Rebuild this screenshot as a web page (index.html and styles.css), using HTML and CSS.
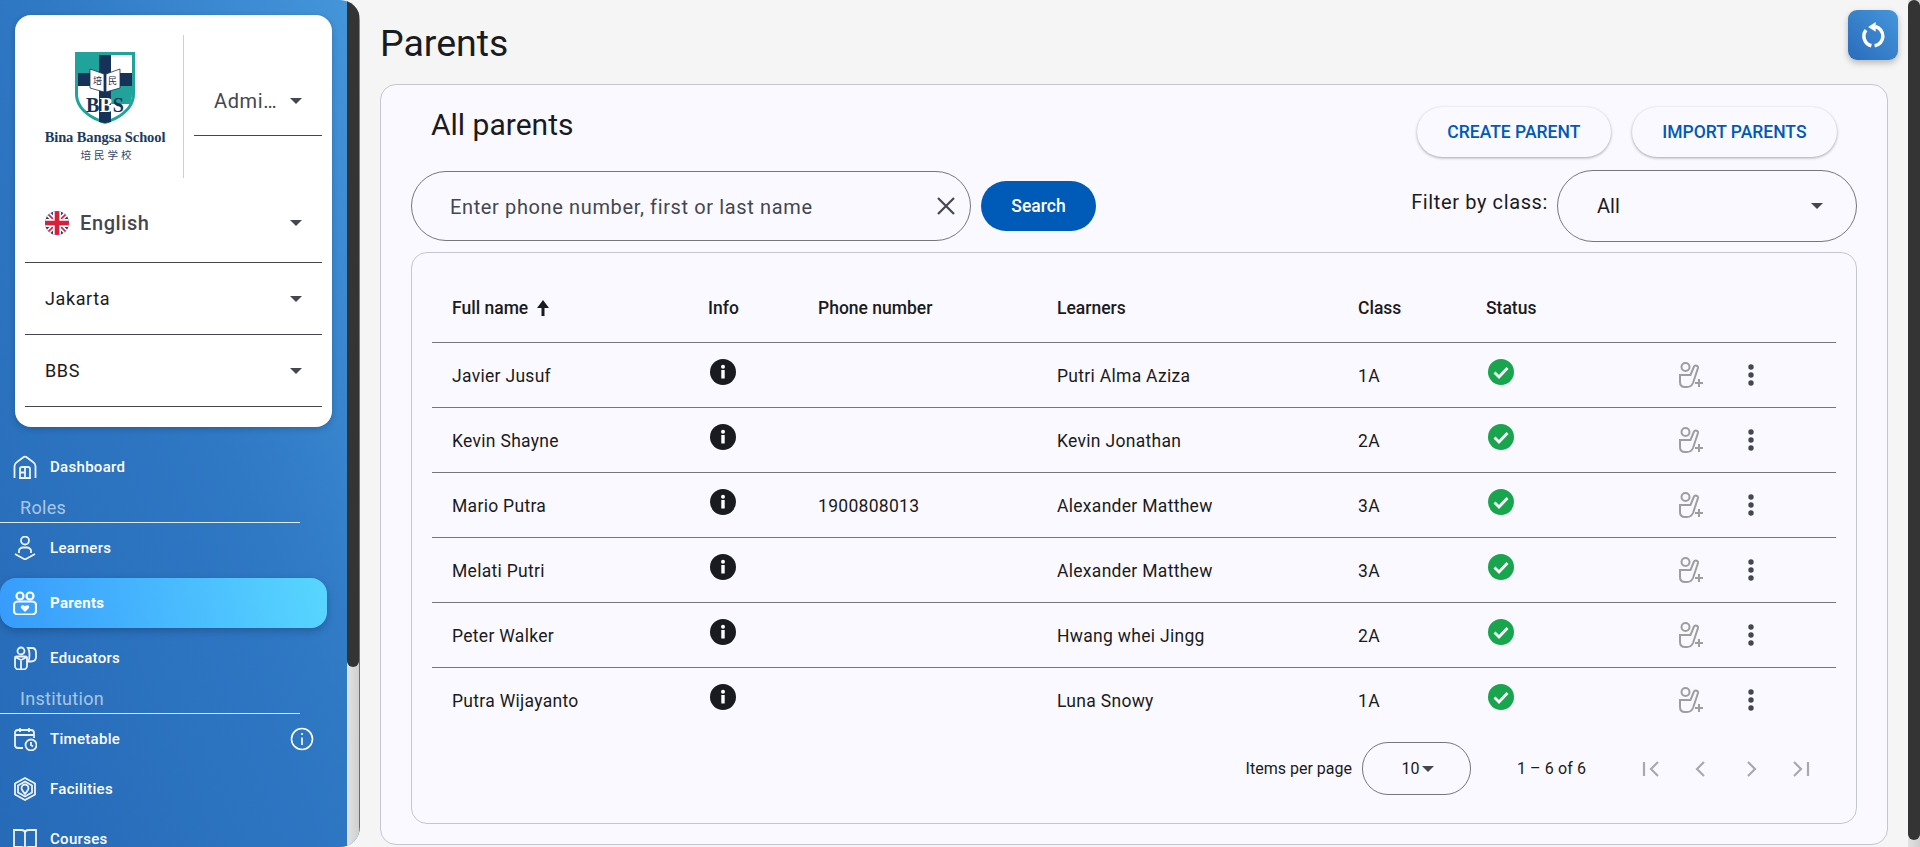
FILE: index.html
```html
<!DOCTYPE html>
<html lang="en">
<head>
<meta charset="utf-8">
<title>Parents</title>
<link rel="stylesheet" href="styles.css">
</head>
<body>
<aside class="sidebar">
  <div class="side-scroll">
    <div class="side-card">
      <div class="brand-row">
        <div class="logo">
          <svg class="crest" viewBox="0 0 60 72" width="60" height="72">
            <path d="M0 0H60V42C60 58 44 68 30 72C16 68 0 58 0 42Z" fill="#20a39a"/>
            <path d="M3 3H57V42C57 56 43 65 30 69C17 65 3 56 3 42Z" fill="#fff"/>
            <path d="M3 3H25V24H3Z" fill="#20a39a"/>
            <path d="M35 24H57V42C57 46 56 49 55 52H35Z" fill="#20a39a"/>
            <path d="M24 3H36V21H57V34H36V70L30 71L24 70V34H3V21H24Z" fill="#163259"/>
            <path d="M15 17L29 22V40L15 36ZM45 17L31 22V40L45 36Z" fill="#fff" stroke="#163259" stroke-width=".8"/>
            <text class="crest-cjk" x="22.500" y="32">培</text>
            <text class="crest-cjk" x="37.500" y="32">民</text>
            <text class="crest-bbs" x="30" y="60">B<tspan class="crest-mid">B</tspan>S</text>
          </svg>
          <div class="logo-name">Bina Bangsa School</div>
          <div class="logo-cjk">培民学校</div>
        </div>
        <div class="brand-divider"></div>
        <div class="select select-admin">
          <span class="select-text">Admi…</span>
          <span class="caret"></span>
        </div>
      </div>
      <div class="select select-lang">
        <svg class="flag" viewBox="0 0 24 24" width="24" height="24">
          <defs><clipPath id="flagclip"><circle cx="12" cy="12" r="12"/></clipPath></defs>
          <g clip-path="url(#flagclip)">
            <rect width="24" height="24" fill="#28407f"/>
            <path d="M0 0L24 24M24 0L0 24" stroke="#fff" stroke-width="5"/>
            <path d="M0 0L24 24M24 0L0 24" stroke="#d8203a" stroke-width="1.600"/>
            <path d="M12 0V24M0 12H24" stroke="#fff" stroke-width="8"/>
            <path d="M12 0V24M0 12H24" stroke="#d8203a" stroke-width="4.600"/>
          </g>
        </svg>
        <span class="select-text lang-text">English</span>
        <span class="caret"></span>
      </div>
      <div class="select"><span class="select-text">Jakarta</span><span class="caret"></span></div>
      <div class="select"><span class="select-text">BBS</span><span class="caret"></span></div>
    </div>
    <nav class="nav">
      <a class="nav-item">
        <svg class="nav-icon" viewBox="0 0 24 24"><path d="M1.500 23V11C1.500 9 2.500 8 4 7L10 2.500C11 1.500 13 1.500 14 2.500L20 7C21.500 8 22.500 9 22.500 11V23"/><path d="M7 23V14C7 13 8 12 9 12H15C16 12 17 13 17 14V23ZM7 17.500H12M12 12V23"/></svg>
        <span>Dashboard</span>
      </a>
      <div class="nav-section">Roles</div>
      <a class="nav-item">
        <svg class="nav-icon" viewBox="0 0 24 24"><circle cx="12" cy="4.500" r="4"/><path d="M6 17V14.500C6 13 8 11.500 10 11.500H14C16 11.500 18 13 18 14.500V17"/><path d="M2 18L12 23.500L22 18"/></svg>
        <span>Learners</span>
      </a>
      <a class="nav-item nav-active">
        <svg class="nav-icon" viewBox="0 0 24 24"><circle cx="7" cy="5" r="3.500"/><circle cx="17" cy="5" r="3.500"/><path d="M5 10.500H19C21 10.500 23 12 23 14V20C23 22 21 23.500 19 23.500H5C3 23.500 1 22 1 20V14C1 12 3 10.500 5 10.500Z"/><path class="fill" d="M12 21L8 17C7 15 9 13 12 15C15 13 17 15 16 17Z"/></svg>
        <span>Parents</span>
      </a>
      <a class="nav-item">
        <svg class="nav-icon" viewBox="0 0 24 24"><circle cx="8" cy="5" r="3.500"/><path d="M2 12C2 11 3 10.500 4 10.500H12C13 10.500 14 11 14 12V20C14 22 12 23.500 10 23.500H6C4 23.500 2 22 2 20ZM8 14V23.500M2 11L8 14L14 11"/><path d="M15 2H19C22 2 23 4 23 7V11C23 14 21 15.500 18 15.500H15C17 13 17 5 15 2Z"/></svg>
        <span>Educators</span>
      </a>
      <div class="nav-section">Institution</div>
      <a class="nav-item">
        <svg class="nav-icon" viewBox="0 0 24 24"><path d="M10 21H5C3 21 2 20 2 18V6C2 4 3 3 5 3H18C20 3 21 4 21 6V11M2 8H21M7 1V5M16 1V5"/><circle cx="18" cy="18" r="5.500"/><path d="M18 15V18L20 19.500"/></svg>
        <span>Timetable</span>
        <svg class="nav-info" viewBox="0 0 24 24"><circle cx="12" cy="12" r="10.500"/><path d="M12 10.500V18M12 6V8"/></svg>
      </a>
      <a class="nav-item">
        <svg class="nav-icon" viewBox="0 0 24 24"><path d="M12 1L22 6.500V17.500L12 23L2 17.500V6.500Z"/><path d="M12 4.500L19 8.500V15.500L12 19.500L5 15.500V8.500Z"/><path d="M12 17C9.500 14 8.500 12.500 8.500 11A3.500 3.500 0 0 1 15.500 11C15.500 12.500 14.500 14 12 17Z"/></svg>
        <span>Facilities</span>
      </a>
      <a class="nav-item">
        <svg class="nav-icon" viewBox="0 0 24 24"><path d="M1 3H8C10 3 12 4 12 6V23C12 21 10 20 8 20H1ZM23 3H16C14 3 12 4 12 6V23C12 21 14 20 16 20H23Z"/></svg>
        <span>Courses</span>
      </a>
    </nav>
  </div>
  <div class="rail rail-side"><div class="thumb thumb-side"></div></div>
</aside>

<main class="main">
  <header class="page-head">
    <h1 class="page-title">Parents</h1>
    <button class="refresh" type="button" aria-label="Refresh">
      <svg viewBox="0 0 24 24" width="26" height="26"><path class="refresh-arc" d="M5.600 7.500A9 9 0 0 0 10.500 21.900M13.500 21.900A9 9 0 0 0 14 4.200"/><path class="refresh-head" d="M14.500 0L7.500 4.500L14.500 9Z"/></svg>
    </button>
  </header>
  <section class="panel">
    <div class="panel-head">
      <h2 class="panel-title">All parents</h2>
      <div class="panel-actions">
        <button class="pill-btn" type="button">CREATE PARENT</button>
        <button class="pill-btn" type="button">IMPORT PARENTS</button>
      </div>
    </div>
    <div class="toolbar">
      <div class="search-field">
        <span class="search-text">Enter phone number, first or last name</span>
        <svg class="search-clear" viewBox="0 0 20 20" width="20" height="20"><path d="M2 2L18 18M18 2L2 18"/></svg>
      </div>
      <button class="search-btn" type="button">Search</button>
      <div class="filter">
        <span class="filter-label">Filter by class:</span>
        <div class="filter-select"><span>All</span><span class="caret"></span></div>
      </div>
    </div>
    <div class="table-card">
      <table class="table">
        <colgroup>
          <col class="c-name"><col class="c-info"><col class="c-phone"><col class="c-learner"><col class="c-class"><col class="c-status"><col class="c-actions">
        </colgroup>
        <thead>
          <tr>
            <th><span class="th-sort">Full name <svg viewBox="0 0 16 18" width="16" height="18"><path d="M8 1L14 9H9.500V17H6.500V9H2Z"/></svg></span></th>
            <th>Info</th><th>Phone number</th><th>Learners</th><th>Class</th><th>Status</th><th></th>
          </tr>
        </thead>
        <tbody id="rows"></tbody>
      </table>
      <div class="paginator">
        <span class="pg-label">Items per page</span>
        <div class="pg-select"><span>10</span><span class="caret"></span></div>
        <span class="pg-range">1 – 6 of 6</span>
        <div class="pg-buttons">
          <span class="pg-btn"><svg viewBox="0 0 24 24" width="24" height="24"><path d="M5 5V19M19 5L12 12L19 19"/></svg></span>
          <span class="pg-btn"><svg viewBox="0 0 24 24" width="24" height="24"><path d="M15 5L8 12L15 19"/></svg></span>
          <span class="pg-btn"><svg viewBox="0 0 24 24" width="24" height="24"><path d="M9 5L16 12L9 19"/></svg></span>
          <span class="pg-btn"><svg viewBox="0 0 24 24" width="24" height="24"><path d="M5 5L12 12L5 19M19 5V19"/></svg></span>
        </div>
      </div>
    </div>
  </section>
</main>
<div class="rail rail-page"><div class="thumb thumb-page"></div></div>

<template id="row-tpl">
  <tr>
    <td class="t-text t-name"></td>
    <td><svg class="status-icon" viewBox="0 0 26 26" width="26" height="26"><circle cx="13" cy="13" r="13" fill="#1a1b20"/><rect x="11.300" y="11" width="3.400" height="8.500" fill="#fff"/><circle cx="13" cy="7.800" r="2" fill="#fff"/></svg></td>
    <td class="t-text t-phone"></td>
    <td class="t-text t-learner"></td>
    <td class="t-text t-class"></td>
    <td><svg class="status-icon" viewBox="0 0 26 26" width="26" height="26"><circle cx="13" cy="13" r="13" fill="#18a54e"/><path d="M6.500 13.500L11 18L19.500 9" fill="none" stroke="#fff" stroke-width="2.800"/></svg></td>
    <td>
      <div class="row-actions">
        <svg class="add-icon" viewBox="0 0 30 30" width="30" height="30"><circle cx="9.500" cy="7" r="4"/><path d="M4 15V22C4 25 6 27 9 27H11C14 27 16 25.500 17 23L22 8C22.500 6 19 4.500 18 6.500L14.500 15Z"/><path d="M23 19V27M19 23H27"/></svg>
        <svg class="more-icon" viewBox="0 0 6 22" width="6" height="22"><circle cx="3" cy="3" r="2.700"/><circle cx="3" cy="11" r="2.700"/><circle cx="3" cy="19" r="2.700"/></svg>
      </div>
    </td>
  </tr>
</template>
<script src="app.js"></script>
</body>
</html>
```

FILE: app.js
```js
var data = [
  ["Javier Jusuf", "", "Putri Alma Aziza", "1A"],
  ["Kevin Shayne", "", "Kevin Jonathan", "2A"],
  ["Mario Putra", "1900808013", "Alexander Matthew", "3A"],
  ["Melati Putri", "", "Alexander Matthew", "3A"],
  ["Peter Walker", "", "Hwang whei Jingg", "2A"],
  ["Putra Wijayanto", "", "Luna Snowy", "1A"]
];
var tpl = document.getElementById("row-tpl");
var body = document.getElementById("rows");
data.forEach(function (r) {
  var n = tpl.content.cloneNode(true);
  n.querySelector(".t-name").textContent = r[0];
  n.querySelector(".t-phone").textContent = r[1];
  n.querySelector(".t-learner").textContent = r[2];
  n.querySelector(".t-class").textContent = r[3];
  body.appendChild(n);
});
```

FILE: styles.css
```css
* { box-sizing: border-box; }
html, body { margin: 0; height: 100%; }
body {
  display: flex;
  height: 847px;
  overflow: hidden;
  background: #f5f5f5;
  color: #1a1b20;
  font-family: Roboto, "Liberation Sans", "Noto Sans CJK SC", sans-serif;
}
.sidebar {
  flex: 0 0 360px;
  display: flex;
  height: 847px;
  overflow: hidden;
  border-radius: 0 20px 20px 0;
  background: linear-gradient(to bottom left, #4596db 0%, #2f78c4 45%, #266ab8 100%);
}
.side-scroll { flex: 1; min-width: 0; padding-top: 15px; }
.rail { flex: 0 0 12px; background: linear-gradient(to right, #e2e2e2, #cfcfcf); }
.rail-side { margin-right: 1px; border-radius: 0 0 14px 0; }
.thumb { background: #343434; }
.thumb-side { height: 667px; border-radius: 0 0 6px 6px; }
.rail-page { border-radius: 0; }
.thumb-page { height: 840px; border-radius: 6px; }

.side-card {
  width: 317px;
  height: 412px;
  margin: 0 0 15px 15px;
  padding: 20px 10px 0;
  background: #fff;
  border-radius: 16px;
  box-shadow: 0 2px 6px rgba(0, 0, 0, .2);
}
.brand-row { display: flex; align-items: flex-start; height: 144px; }
.logo { width: 158px; height: 143px; display: flex; flex-direction: column; align-items: center; padding: 17px 0 0 2px; }
.crest { display: block; }
.crest-cjk { font-size: 9px; font-family: "Noto Sans CJK SC", sans-serif; fill: #163259; text-anchor: middle; }
.crest-bbs { font-size: 20px; font-weight: 700; font-family: "Liberation Serif", serif; fill: #163259; text-anchor: middle; }
.crest-mid { fill: #fff; }
.logo-name { margin-top: 4px; font: 700 14.500px/18px "Liberation Serif", serif; color: #1b3a5e; white-space: nowrap; letter-spacing: -.1px; }
.logo-cjk { font: 10.500px/14px "Noto Sans CJK SC", sans-serif; letter-spacing: 3px; padding-left: 5px; color: #33496a; margin-top: 2px; }
.brand-divider { width: 1px; height: 143px; background: #cfcfcf; margin-right: 10px; }
.select {
  display: flex;
  align-items: center;
  height: 72px;
  padding: 0 20px;
  border-bottom: 1px solid #44474f;
  font-size: 18px;
  letter-spacing: .6px;
}
.select-text { flex: 1; min-width: 0; white-space: nowrap; }
.select-admin { width: 128px; margin-top: 29px; padding-top: 2px; color: #44474f; font-size: 20px; }
.select-lang { height: 84px; padding-top: 4px; }
.lang-text { color: #44474f; font-size: 20px; font-weight: 500; }
.flag { margin-right: 11px; }
.caret {
  flex: none;
  width: 0;
  height: 0;
  border-left: 6px solid transparent;
  border-right: 6px solid transparent;
  border-top: 6px solid #44474f;
}

.nav-item {
  display: flex;
  align-items: center;
  width: 327px;
  height: 50px;
  padding: 0 20px 0 13px;
  color: #fff;
  font-size: 15px;
  font-weight: 500;
  letter-spacing: .3px;
  gap: 13px;
}
.nav-item > span { flex: 1; }
.nav-icon { flex: none; width: 24px; height: 24px; fill: none; stroke: #fff; stroke-width: 1.800; opacity: .92; }
.nav-icon .fill { fill: #fff; stroke: none; }
.nav-info { flex: none; width: 24px; height: 24px; fill: none; stroke: #fff; stroke-width: 1.600; margin-right: -7px; }
.nav-section {
  width: 300px;
  height: 31px;
  padding: 5px 0 0 20px;
  border-bottom: 1px solid rgba(255, 255, 255, .85);
  color: rgba(255, 255, 255, .62);
  font-size: 18px;
  line-height: 21px;
  letter-spacing: .3px;
}
.nav-active {
  height: 50px;
  margin: 5px 0;
  border-radius: 16px;
  background: linear-gradient(80deg, #379bfc, #58d6ff);
  box-shadow: 0 3px 8px rgba(0, 0, 0, .22);
  font-weight: 700;
}
.nav-active .nav-icon { opacity: 1; stroke-width: 2.200; }

.main { flex: 1; min-width: 0; display: flex; flex-direction: column; padding: 0 20px; }
.page-head { display: flex; justify-content: space-between; height: 84px; flex: none; }
.page-title { margin: 22px 0 0; font-size: 37.500px; line-height: 42px; font-weight: 400; }
.refresh {
  width: 50px;
  height: 50px;
  margin: 10px -10px 0 0;
  padding: 0;
  border: 0;
  border-radius: 9px;
  background: linear-gradient(to bottom left, #4596db, #2a6cbb);
  box-shadow: 0 3px 6px rgba(0, 0, 0, .25);
  display: flex;
  align-items: center;
  justify-content: center;
}
.refresh-arc { fill: none; stroke: #fff; stroke-width: 3.200; }
.refresh-head { fill: #fff; }
.panel {
  height: 761px;
  flex: none;
  padding: 0 30px;
  background: #faf9ff;
  border: 1px solid #c5c6d0;
  border-radius: 16px;
}
.panel-head { display: flex; justify-content: space-between; height: 85px; }
.panel-title { margin: 22px 0 0 20px; font-size: 30px; line-height: 36px; font-weight: 400; }
.panel-actions { display: flex; gap: 21px; margin: 22px 20px 0 0; }
.pill-btn {
  height: 50px;
  padding: 0 30.500px;
  border: 0;
  border-radius: 25px;
  background: #faf9ff;
  color: #005ab8;
  font: 500 17.500px Roboto, sans-serif;
  box-shadow: 0 1px 3px rgba(0, 0, 0, .35);
}
.toolbar { display: flex; align-items: center; height: 72px; }
.search-field {
  display: flex;
  align-items: center;
  justify-content: space-between;
  width: 560px;
  height: 70px;
  padding: 0 14px 0 38px;
  border: 1px solid #75777f;
  border-radius: 35px;
}
.search-text { color: #44474f; font-size: 20px; letter-spacing: .63px; padding-top: 1px; }
.search-clear { fill: none; stroke: #44474f; stroke-width: 2.200; }
.search-btn {
  width: 115px;
  height: 50px;
  margin-left: 10px;
  border: 0;
  border-radius: 25px;
  background: #005ab8;
  color: #fff;
  font: 500 17.500px Roboto, sans-serif;
}
.filter { margin-left: auto; display: flex; align-items: center; gap: 9px; }
.filter-label { font-size: 20px; letter-spacing: .62px; padding-bottom: 9px; }
.filter-select {
  display: flex;
  align-items: center;
  justify-content: space-between;
  width: 300px;
  height: 72px;
  padding: 0 33px 0 39px;
  border: 1px solid #75777f;
  border-radius: 36px;
  font-size: 20px;
}
.table-card {
  height: 572px;
  margin-top: 10px;
  padding: 0 20px;
  border: 1px solid #c5c6d0;
  border-radius: 16px;
}
.table { width: 100%; border-collapse: collapse; table-layout: fixed; }
.c-name { width: 256px; }
.c-info { width: 110px; }
.c-phone { width: 239px; }
.c-learner { width: 301px; }
.c-class { width: 128px; }
.c-status { width: 158px; }
.table th {
  height: 89px;
  padding: 22px 0 0 20px;
  border-bottom: 1px solid #75777f;
  text-align: left;
  font-size: 17.500px;
  font-weight: 500;
}
.th-sort { display: inline-flex; align-items: center; gap: 7px; }
.th-sort svg { fill: #1a1b20; }
.table td {
  height: 65px;
  padding: 0 0 0 20px;
  border-bottom: 1px solid #75777f;
  font-size: 17.500px;
  letter-spacing: .3px;
}
.table td.t-text { padding-top: 2px; }
.table tbody tr:last-child td { border-bottom: 0; }
.status-icon { display: block; margin: 0 0 5px 2px; }
.row-actions { display: flex; align-items: center; padding-left: 32px; }
.add-icon { fill: none; stroke: #9e9e9e; stroke-width: 2; }
.more-icon { fill: #44474f; margin-left: 42px; }
.paginator { display: flex; align-items: center; height: 53px; margin-top: 10px; padding-right: 10px; font-size: 16px; justify-content: flex-end; }
.pg-label { margin-right: 10px; }
.pg-select {
  display: flex;
  align-items: center;
  justify-content: center;
  gap: 3px;
  width: 109px;
  height: 53px;
  padding-left: 3px;
  border: 1px solid #75777f;
  border-radius: 26px;
  font-size: 16px;
}
.pg-range { margin: 0 40px 0 46px; letter-spacing: .1px; }
.pg-buttons { display: flex; }
.pg-btn { display: flex; width: 50px; justify-content: center; }
.pg-btn svg { fill: none; stroke: #a9a9ad; stroke-width: 2.200; }
```
